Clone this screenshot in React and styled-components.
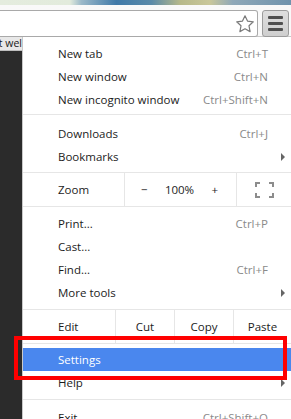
import React from 'react'
import styled, { createGlobalStyle } from 'styled-components'

const Global = createGlobalStyle`
  html, body { margin: 0; padding: 0; background: #fff; }
  body { font-family: "Open Sans", "Noto Sans", sans-serif; }
`

const groups = [
  [
    { label: 'New tab', key: 'Ctrl+T' },
    { label: 'New window', key: 'Ctrl+N' },
    { label: 'New incognito window', key: 'Ctrl+Shift+N' },
  ],
  [
    { label: 'Downloads', key: 'Ctrl+J' },
    { label: 'Bookmarks', sub: true },
  ],
]

const toolGroup = [
  { label: 'Print...', key: 'Ctrl+P' },
  { label: 'Cast...' },
  { label: 'Find...', key: 'Ctrl+F' },
  { label: 'More tools', sub: true },
]

const Star = () => (
  <svg width="20" height="20" viewBox="0 0 20 20">
    <path d="M10 1.8l2.5 5.3 5.8.7-4.3 4 1.1 5.8L10 14.8l-5.1 2.8 1.1-5.8-4.3-4 5.8-.7z"
      fill="#fff" stroke="#7a7a7a" strokeWidth="1.2" strokeLinejoin="round" />
  </svg>
)

const FullscreenIcon = () => (
  <svg width="19" height="16" viewBox="0 0 19 16">
    <path d="M1 5V1h4M14 1h4v4M18 11v4h-4M5 15H1v-4" fill="none" stroke="#8c8c8c" strokeWidth="2" />
  </svg>
)

const Item = ({ label, hotkey, sub, active }) => (
  <Row $active={active}>
    <Label>{label}</Label>
    {hotkey && <Key>{hotkey}</Key>}
    {sub && <Arrow />}
  </Row>
)

export default function App() {
  return (
    <>
      <Global />
      <Page>
        <Strip />
        <Toolbar>
          <Omnibox>
            <Star />
          </Omnibox>
          <MenuButton>
            <Bar /><Bar /><Bar />
          </MenuButton>
        </Toolbar>
        <Body>
          <Side>
            <TabStub><span>st wel</span></TabStub>
          </Side>
          <Menu>
            <Group $top={5} $bottom={3}>
              {groups[0].map(i => <Item key={i.label} label={i.label} hotkey={i.key} sub={i.sub} />)}
            </Group>
            <Sep />
            <Group $top={7} $bottom={4}>
              {groups[1].map(i => <Item key={i.label} label={i.label} hotkey={i.key} sub={i.sub} />)}
            </Group>
            <Sep />
            <Split>
              <Cell $w={102}><Label>Zoom</Label></Cell>
              <ZoomCtl>
                <span>−</span>
                <span>100%</span>
                <span>+</span>
              </ZoomCtl>
              <Cell $center $last><FullscreenIcon /></Cell>
            </Split>
            <Sep />
            <Group $top={5} $bottom={5}>
              {toolGroup.map(i => <Item key={i.label} label={i.label} hotkey={i.key} sub={i.sub} />)}
            </Group>
            <Sep />
            <Split>
              <Cell $w={93}><Label>Edit</Label></Cell>
              <Cell $w={59} $center>Cut</Cell>
              <Cell $w={59} $center>Copy</Cell>
              <Cell $center $last>Paste</Cell>
            </Split>
            <Sep />
            <Group $top={4} $bottom={5}>
              <Item label="Settings" active />
              <Item label="Help" sub />
            </Group>
            <Sep />
            <Group $top={6} $bottom={4}>
              <Item label="Exit" hotkey="Ctrl+Shift+Q" />
            </Group>
          </Menu>
        </Body>
        <Highlight />
      </Page>
    </>
  )
}

const Page = styled.div`
  position: relative;
  width: 291px;
  height: 419px;
  overflow: hidden;
  background: #fff;
  display: flex;
  flex-direction: column;
`
const Strip = styled.div`
  height: 5px;
  flex: none;
  background: linear-gradient(90deg, #e4ecde 0%, #e2ebdc 24%, #9bb9c9 28%, #3f79a8 40%, #5a8aa8 52%, #b7b98a 62%, #c9c79a 72%, #8fa8b8 80%, #6f93ad 100%);
`
const Toolbar = styled.div`
  height: 32px;
  flex: none;
  display: flex;
  align-items: flex-start;
  padding-top: 5px;
  box-sizing: border-box;
  background: #f9f9f9;
  border-bottom: 1px solid #c8c8c8;
`
const Omnibox = styled.div`
  flex: 1;
  height: 27px;
  box-sizing: border-box;
  background: #fff;
  border: 1px solid #a9a9a9;
  border-left: none;
  border-radius: 0 3px 3px 0;
  display: flex;
  align-items: center;
  justify-content: flex-end;
  padding-right: 2px;
`
const MenuButton = styled.div`
  width: 27px;
  height: 27px;
  margin: 0 2px 0 4px;
  box-sizing: border-box;
  background: linear-gradient(#dedede, #cfcfcf);
  border: 1px solid #9c9c9c;
  border-radius: 3px;
  display: flex;
  flex-direction: column;
  align-items: center;
  justify-content: center;
  gap: 3px;
`
const Bar = styled.div`
  width: 15px;
  height: 3px;
  border-radius: 1px;
  background: #505050;
`
const Body = styled.div`
  flex: 1;
  display: flex;
  min-height: 0;
`
const Side = styled.div`
  width: 22px;
  flex: none;
  background: #2b2b2b;
`
const TabStub = styled.div`
  height: 13px;
  background: #e8e8e8;
  border-bottom: 1px solid #bdbdbd;
  overflow: hidden;
  font-size: 10.5px;
  line-height: 13px;
  color: #1a1a1a;
  white-space: nowrap;
  display: flex;
  justify-content: flex-end;
  span { display: block; flex: none; }
`
const Menu = styled.div`
  flex: 1;
  background: #fff;
  border-left: 1px solid #c9c9c9;
  color: #1c1c1c;
  font-size: 11.5px;
`
const Group = styled.div`
  padding: ${p => p.$top}px 0 ${p => p.$bottom}px;
`
const Row = styled.div`
  height: 23px;
  display: flex;
  align-items: center;
  padding: 0 6px 0 35px;
  background: ${p => (p.$active ? '#4a87ee' : 'transparent')};
  color: ${p => (p.$active ? '#fff' : '#1c1c1c')};
`
const Label = styled.span`
  flex: 1;
`
const Key = styled.span`
  color: #8a8a8a;
  margin-right: 17px;
`
const Arrow = styled.span`
  width: 0;
  height: 0;
  border-top: 4px solid transparent;
  border-bottom: 4px solid transparent;
  border-left: 4px solid #666;
`
const Sep = styled.div`
  height: 1px;
  background: #e6e6e6;
`
const Split = styled.div`
  height: 33px;
  display: flex;
`
const Cell = styled.div`
  ${p => (p.$last ? 'flex: 1;' : `width: ${p.$w}px; flex: none;`)}
  box-sizing: border-box;
  display: flex;
  align-items: center;
  justify-content: ${p => (p.$center ? 'center' : 'flex-start')};
  padding-left: ${p => (p.$center ? 0 : 35)}px;
  border-right: ${p => (p.$last ? 'none' : '1px solid #e6e6e6')};
`
const ZoomCtl = styled.div`
  width: 112px;
  flex: none;
  box-sizing: border-box;
  border-right: 1px solid #e6e6e6;
  display: flex;
  align-items: center;
  justify-content: space-between;
  padding: 0 18px 0 16px;
`
const Highlight = styled.div`
  position: absolute;
  left: 14px;
  top: 336px;
  width: 273px;
  height: 44px;
  box-sizing: border-box;
  border: 4px solid #ff0000;
  pointer-events: none;
`
